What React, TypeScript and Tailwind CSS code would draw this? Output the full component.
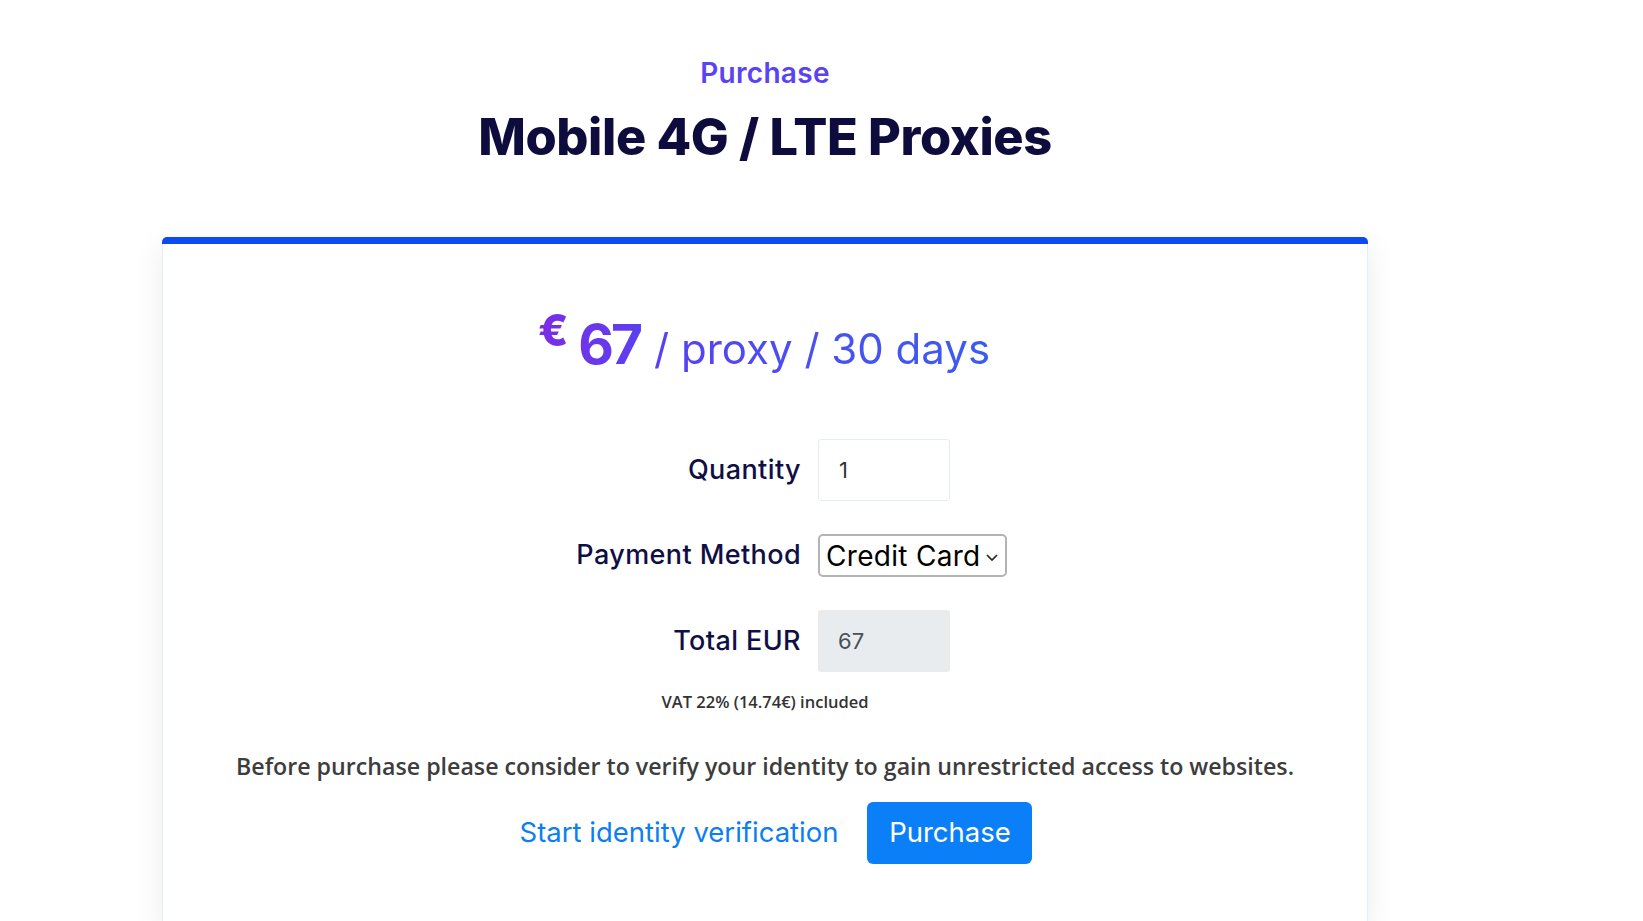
import React from "react";

export default function App() {
  const poppins = { fontFamily: "Inter, 'Noto Sans', sans-serif" };
  return (
    <div className="min-h-[921px] w-[1643px] bg-white overflow-hidden" style={{ fontFamily: "Inter, sans-serif" }}>
      <div className="ml-[162px] w-[1206px]">
        <div className="pt-[55px] text-center">
          <div className="text-[28px] leading-[36px] font-semibold text-[#5a43f2] tracking-[0.3px]" style={poppins}>Purchase</div>
          <h1 className="mt-[18px] text-[50.5px] leading-[56px] font-extrabold text-[#0e0c3c] tracking-[-0.4px]" style={poppins}>
            Mobile 4G / LTE Proxies
          </h1>
        </div>

        <div className="mt-[72px] rounded-t-[5px] border-t-[7px] border-[#0a4cf2] bg-white shadow-[0_8px_30px_rgba(0,0,0,0.08)]">
          <div className="border-x border-[#e4eef8] pb-[60px]">
            <div className="pt-[70px] flex justify-center items-start" style={poppins}>
              <span className="bg-gradient-to-r from-[#7b2be6] from-0% via-[#5641f0] via-25% to-[#3a5cf0] to-100% bg-clip-text text-transparent flex items-start ml-[-2px]">
                <span className="text-[44px] leading-[40px] font-extrabold mt-[-4px] mr-[10px]">€</span>
                <span className="text-[55px] leading-[60px] font-bold tracking-[-3px]">67</span>
                <span className="text-[42px] leading-[60px] font-normal ml-[14px] mt-[5px]">/ proxy / 30 days</span>
              </span>
            </div>

            <div className="mt-[60px] flex flex-col gap-[33px]" style={poppins}>
              <div className="flex items-center">
                <label className="w-[638px] text-right text-[27px] font-medium text-[#100f45] tracking-[0.4px]">Quantity</label>
                <div className="ml-[17px] w-[132px] h-[62px] border border-[#e3ecf6] rounded-[3px] flex items-center px-[20px] text-[22px] text-[#333]">1</div>
              </div>
              <div className="flex items-center">
                <label className="w-[638px] text-right text-[27px] font-medium text-[#100f45] tracking-[0.4px]">Payment Method</label>
                <div className="ml-[17px] w-[189px] h-[43px] border-2 border-[#b3b3b3] rounded-[5px] flex items-center justify-between pl-[6px] pr-[6px] text-[28px] text-black">
                  <span className="tracking-[0.3px]">Credit Card</span>
                  <svg width="14" height="10" viewBox="0 0 14 10" className="mt-[2px]">
                    <path d="M2 3 L7 8 L12 3" fill="none" stroke="#222" strokeWidth="1.6" />
                  </svg>
                </div>
              </div>
              <div className="flex items-center">
                <label className="w-[638px] text-right text-[27px] font-medium text-[#100f45] tracking-[0.4px]">Total EUR</label>
                <div className="ml-[17px] w-[132px] h-[62px] bg-[#e9ecef] rounded-[3px] flex items-center px-[20px] text-[22px] text-[#495057]">67</div>
              </div>
            </div>

            <div className="mt-[18px] text-center text-[16.5px] font-semibold text-[#333]" style={{ fontFamily: "'Open Sans', sans-serif" }}>
              VAT 22% (14.74€) included
            </div>

            <div className="mt-[34px] text-center text-[23.2px] font-semibold text-[#3d3d3d]" style={{ fontFamily: "'Open Sans', sans-serif" }}>
              Before purchase please consider to verify your identity to gain unrestricted access to websites.
            </div>

            <div className="mt-[18px] flex justify-center items-center gap-[29px]" style={poppins}>
              <a className="text-[27.5px] text-[#0b7ef2] ml-[22px]">Start identity verification</a>
              <button className="w-[165px] h-[62px] rounded-[6px] bg-[#0b7ff8] text-white text-[27.5px]">Purchase</button>
            </div>
          </div>
        </div>
      </div>
    </div>
  );
}
